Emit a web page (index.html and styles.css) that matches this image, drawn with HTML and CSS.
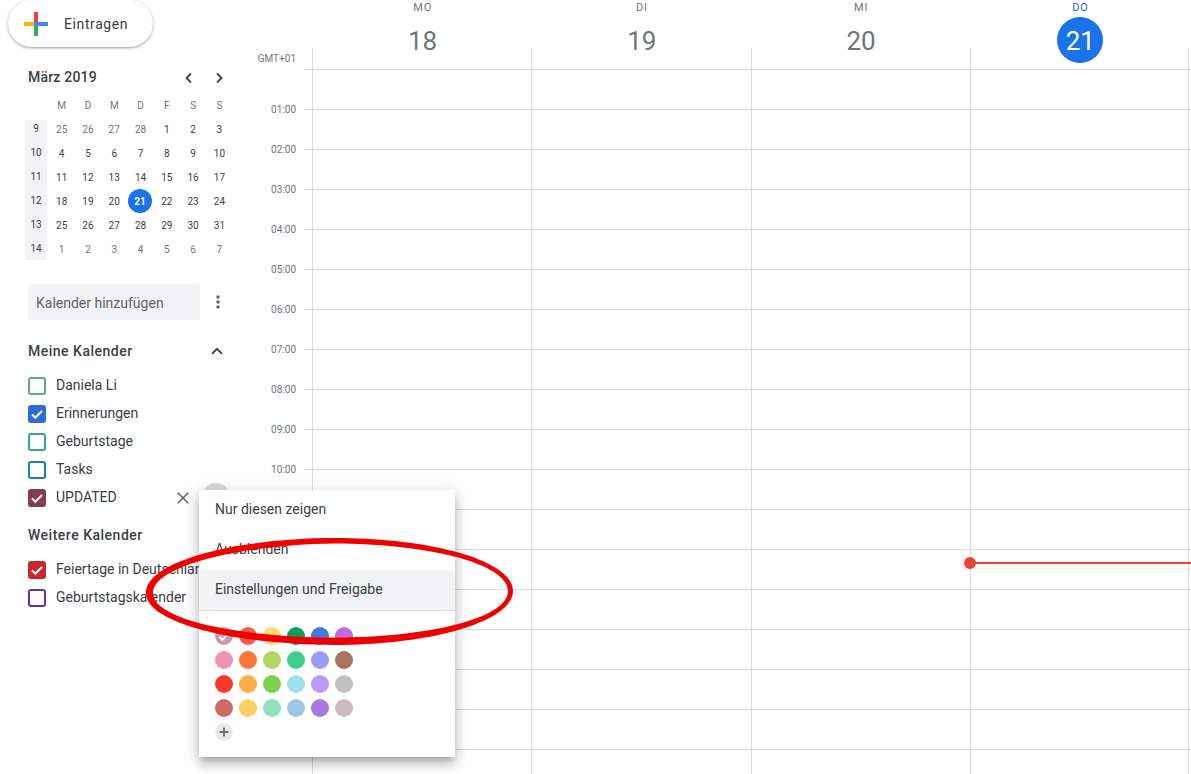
FILE: index.html
```html
<!DOCTYPE html>
<html lang="de">
<head>
  <meta charset="UTF-8" />
  <title>Kalender</title>
  <link rel="stylesheet" href="styles.css">
</head>
<body>
  <aside class="sidebar">
    <button class="create-btn">
      <svg class="create-plus" width="24" height="24" viewBox="0 0 24 24">
        <path fill="#fbbc05" d="M0 10h10v4H0z"/>
        <path fill="#34a853" d="M10 14h4v10h-4z"/>
        <path fill="#4285f4" d="M10 10h14v4H10z"/>
        <path fill="#ea4335" d="M10 0h4v10h-4z"/>
      </svg>
      <span>Eintragen</span>
    </button>

    <div class="mini-head">
      <span class="mini-title">März 2019</span>
      <div class="mini-nav">
        <svg width="12" height="12" viewBox="0 0 12 12"><path d="M8 1.500 3.500 6 8 10.500" fill="none" stroke="#3c4043" stroke-width="1.800"/></svg>
        <svg width="12" height="12" viewBox="0 0 12 12"><path d="M4 1.500 8.500 6 4 10.500" fill="none" stroke="#3c4043" stroke-width="1.800"/></svg>
      </div>
    </div>

    <div class="mini-cal">
      <div class="mini-weeks">
        <div>9</div><div>10</div><div>11</div><div>12</div><div>13</div><div>14</div>
      </div>
      <div class="mini-days">
        <span class="wd">M</span><span class="wd">D</span><span class="wd">M</span><span class="wd">D</span><span class="wd">F</span><span class="wd">S</span><span class="wd">S</span>
        <span class="off">25</span><span class="off">26</span><span class="off">27</span><span class="off">28</span><span>1</span><span>2</span><span>3</span>
        <span>4</span><span>5</span><span>6</span><span>7</span><span>8</span><span>9</span><span>10</span>
        <span>11</span><span>12</span><span>13</span><span>14</span><span>15</span><span>16</span><span>17</span>
        <span>18</span><span>19</span><span>20</span><span class="cur"><b>21</b></span><span>22</span><span>23</span><span>24</span>
        <span>25</span><span>26</span><span>27</span><span>28</span><span>29</span><span>30</span><span>31</span>
        <span class="off">1</span><span class="off">2</span><span class="off">3</span><span class="off">4</span><span class="off">5</span><span class="off">6</span><span class="off">7</span>
      </div>
    </div>

    <div class="add-row">
      <div class="add-input">Kalender hinzufügen</div>
      <svg width="4" height="14" viewBox="0 0 4 14" fill="#5f6368"><circle cx="2" cy="2" r="1.700"/><circle cx="2" cy="7" r="1.700"/><circle cx="2" cy="12" r="1.700"/></svg>
    </div>

    <div class="section-head my-head">
      <span>Meine Kalender</span>
      <svg width="12" height="8" viewBox="0 0 12 8"><path d="M1 6.800 6 1.800l5 5" fill="none" stroke="#3c4043" stroke-width="1.800"/></svg>
    </div>
    <ul class="cal-list">
      <li><i class="box teal"></i>Daniela Li</li>
      <li><i class="box blue checked"><svg viewBox="0 0 18 18"><path d="M4 9.500l3.300 3.300L14 6" /></svg></i>Erinnerungen</li>
      <li><i class="box green"></i>Geburtstage</li>
      <li><i class="box ocean"></i>Tasks</li>
      <li class="hovered">
        <i class="box wine checked"><svg viewBox="0 0 18 18"><path d="M4 9.500l3.300 3.300L14 6" /></svg></i>
        <span class="cal-name">UPDATED</span>
        <svg class="close-icon" width="12" height="12" viewBox="0 0 12 12"><path d="M.7.700l10.600 10.600M11.300.700.700 11.300" stroke="#5f6368" stroke-width="1.600"/></svg>
        <span class="more-dot"></span>
      </li>
    </ul>

    <div class="section-head other-head"><span>Weitere Kalender</span></div>
    <ul class="cal-list">
      <li><i class="box red checked"><svg viewBox="0 0 18 18"><path d="M4 9.500l3.300 3.300L14 6" /></svg></i>Feiertage in Deutschland</li>
      <li><i class="box violet"></i>Geburtstagskalender</li>
    </ul>
  </aside>

  <main class="main">
    <div class="day-head">
      <div class="day-col"><span class="day-name">MO</span><span class="day-num">18</span></div>
      <div class="day-col"><span class="day-name">DI</span><span class="day-num">19</span></div>
      <div class="day-col"><span class="day-name">MI</span><span class="day-num">20</span></div>
      <div class="day-col today"><span class="day-name">DO</span><span class="day-num">21</span></div>
    </div>
    <div class="grid-area">
      <div class="hours">
        <div class="tz">GMT+01</div>
        <div>01:00</div><div>02:00</div><div>03:00</div><div>04:00</div><div>05:00</div>
        <div>06:00</div><div>07:00</div><div>08:00</div><div>09:00</div><div>10:00</div>
      </div>
      <div class="timeline">
        <div class="day"></div>
        <div class="day"></div>
        <div class="day"></div>
        <div class="day last"><div class="now-line"></div></div>
      </div>
    </div>
  </main>

  <!-- calendar options menu -->
  <div class="menu">
    <div class="menu-item">Nur diesen zeigen</div>
    <div class="menu-item">Ausblenden</div>
    <div class="menu-item active">Einstellungen und Freigabe</div>
    <div class="swatches">
      <span class="dot picked" style="background:#c79ab0"><svg viewBox="0 0 18 18"><path d="M4 9.500l3.300 3.300L14 6" /></svg></span><span class="dot" style="background:#f6594b"></span><span class="dot" style="background:#fddc6f"></span><span class="dot" style="background:#109d58"></span><span class="dot" style="background:#4179e0"></span><span class="dot" style="background:#c26ae0"></span>
      <span class="dot" style="background:#f091b5"></span><span class="dot" style="background:#ff7537"></span><span class="dot" style="background:#b0d962"></span><span class="dot" style="background:#3ecf8e"></span><span class="dot" style="background:#9a9cff"></span><span class="dot" style="background:#ac725e"></span>
      <span class="dot" style="background:#fa3a28"></span><span class="dot" style="background:#ffad46"></span><span class="dot" style="background:#7bd148"></span><span class="dot" style="background:#9fe1e7"></span><span class="dot" style="background:#b99aff"></span><span class="dot" style="background:#c2c2c2"></span>
      <span class="dot" style="background:#cf6a62"></span><span class="dot" style="background:#fad165"></span><span class="dot" style="background:#92e1c0"></span><span class="dot" style="background:#9fc6e7"></span><span class="dot" style="background:#a47ae2"></span><span class="dot" style="background:#cabdbf"></span>
      <span class="dot add"><svg viewBox="0 0 18 18"><path d="M9 4.500v9M4.500 9h9" /></svg></span>
    </div>
  </div>

  <!-- red marker ring around the settings entry -->
  <svg class="marker" width="1191" height="774" viewBox="0 0 1191 774">
    <path fill="#f00000" fill-rule="evenodd" d="M146 593C146 560 240 538 335 538C430 538 513 560 513 591C513 622 430 645 335 645C240 645 146 624 146 593ZM153 593C153 621 245 637.500 335 637.500C425 637.500 508 619 508 591C508 563 425 543.500 335 543.500C245 544.500 153 565 153 593Z"/>
  </svg>
</body>
</html>
```

FILE: styles.css
```css
* {
  box-sizing: border-box;
}
body {
  margin: 0;
  height: 100vh;
  overflow: hidden;
  display: flex;
  background: #fff;
  color: #3c4043;
  font-family: Roboto, "Liberation Sans", sans-serif;
}

/* Sidebar */
.sidebar {
  flex: 0 0 256px;
  padding-left: 28px;
}
.create-btn {
  display: flex;
  align-items: center;
  gap: 16px;
  width: 145px;
  height: 47px;
  margin-left: -20px;
  padding: 0 0 0 16px;
  border: none;
  border-radius: 24px;
  background: #fff;
  box-shadow: 0 1px 2px rgba(60,64,67,0.3), 0 1px 3px 1px rgba(60,64,67,0.15);
  color: #3c4043;
  font: 400 14px Roboto, sans-serif;
  letter-spacing: 0.6px;
}

.mini-head {
  display: flex;
  justify-content: space-between;
  align-items: center;
  width: 197px;
  height: 28px;
  margin-top: 16px;
}
.mini-title {
  font-size: 14px;
  font-weight: 500;
  letter-spacing: 0.2px;
}
.mini-nav {
  display: flex;
  gap: 18px;
  margin-top: 1px;
}

.mini-cal {
  display: flex;
  height: 168px;
  margin: 2px 0 0 -3px;
}
.mini-weeks {
  width: 22px;
  height: 140px;
  margin-top: 27px;
  overflow: hidden;
  background: #f1f3f4;
  font-size: 10px;
  text-align: center;
}
.mini-weeks div {
  height: 24px;
  line-height: 18px;
}
.mini-days {
  display: grid;
  grid-template-columns: repeat(7, 26.3px);
  grid-auto-rows: 24px;
  margin-left: 1.5px;
  font-size: 10px;
}
.mini-days span {
  display: flex;
  justify-content: center;
  align-items: center;
}
.mini-days .wd,
.mini-days .off {
  color: #70757a;
}
.mini-days .cur b {
  display: flex;
  justify-content: center;
  align-items: center;
  flex: none;
  width: 24px;
  height: 24px;
  margin-left: -1px;
  border-radius: 50%;
  background: #1a73e8;
  color: #fff;
}

.add-row {
  display: flex;
  align-items: center;
  gap: 16px;
  margin-top: 23px;
}
.add-input {
  width: 172px;
  height: 36px;
  padding-left: 8px;
  border-radius: 4px 4px 0 0;
  background: #f1f3f4;
  color: #5f6368;
  font-size: 14px;
  line-height: 38px;
}

.section-head {
  display: flex;
  justify-content: space-between;
  align-items: center;
  width: 195px;
  height: 28px;
  font-size: 14px;
  font-weight: 500;
  letter-spacing: 0.5px;
}
.my-head {
  margin-top: 17px;
}
.other-head {
  margin-top: 10px;
}

.cal-list {
  list-style: none;
  margin: 6px 0 0;
  padding: 0;
}
.cal-list li {
  display: flex;
  align-items: center;
  height: 28px;
  font-size: 14px;
  white-space: nowrap;
}
.box {
  flex: none;
  width: 18px;
  height: 18px;
  margin: 2px 10px 0 0;
  border: 2px solid;
  border-radius: 3px;
}
.box svg {
  display: block;
  width: 18px;
  height: 18px;
  margin: -2px;
}
.box path,
.dot.picked path {
  fill: none;
  stroke: #fff;
  stroke-width: 2;
}
.box.teal { color: #5ba88f; }
.box.green { color: #33a88c; }
.box.ocean { color: #1a7fae; }
.box.violet { color: #5e35b1; }
.box.blue { color: #2c6ad4; background: #2c6ad4; }
.box.wine { color: #8a3a4e; background: #8a3a4e; }
.box.red { color: #c9292c; background: #c9292c; }

.cal-name {
  flex: 0 0 121px;
}
.close-icon {
  flex: none;
  margin-top: 2px;
}
.more-dot {
  flex: none;
  width: 28px;
  height: 28px;
  margin-left: 13px;
  border-radius: 50%;
  background: #d9d9d9;
}

/* Week view */
.main {
  flex: 1;
  min-width: 0;
  display: flex;
  flex-direction: column;
}
.day-head {
  position: relative;
  z-index: 1;
  display: flex;
  height: 48px;
  margin-left: 57px;
}
.day-col {
  flex: 0 0 219.25px;
  display: flex;
  flex-direction: column;
  align-items: center;
}
.day-name {
  height: 14px;
  color: #70757a;
  font-size: 11px;
  line-height: 16px;
  letter-spacing: 0.8px;
}
.day-num {
  display: flex;
  justify-content: center;
  align-items: center;
  flex: none;
  width: 46px;
  height: 46px;
  margin-top: 3px;
  padding-top: 1px;
  border-radius: 50%;
  color: #70757a;
  font-size: 26px;
}
.today .day-name {
  color: #1a67d2;
}
.today .day-num {
  background: #1a73e8;
  color: #fff;
}

.grid-area {
  flex: 1;
  display: flex;
}
.hours {
  flex: 0 0 48px;
  padding: 1px 8px 0 0;
  color: #70757a;
  font-size: 10px;
  text-align: right;
}
.hours div {
  height: 40px;
  line-height: 40px;
}
.hours .tz {
  height: 20px;
  margin-bottom: 21px;
  line-height: 20px;
}
.timeline {
  flex: 1;
  display: flex;
  padding-left: 8px;
  background: repeating-linear-gradient(to bottom, transparent 0 39px, #dadce0 39px 40px) 0 -18px;
}
.day {
  position: relative;
  flex: 0 0 219.25px;
  border-left: 1px solid #dadce0;
}
.day.last {
  border-right: 1px solid #dadce0;
}
.now-line {
  position: absolute;
  top: 514px;
  left: -1px;
  right: -4px;
  height: 2px;
  background: #ea4335;
}
.now-line::before {
  content: "";
  position: absolute;
  top: -5px;
  left: -6px;
  width: 12px;
  height: 12px;
  border-radius: 50%;
  background: #ea4335;
}

/* Options menu */
.menu {
  position: absolute;
  top: 490px;
  left: 199px;
  z-index: 2;
  width: 256px;
  background: #fff;
  box-shadow: 0 8px 10px 1px rgba(0,0,0,0.14), 0 3px 14px 2px rgba(0,0,0,0.12), 0 5px 5px -3px rgba(0,0,0,0.2);
}
.menu-item {
  height: 40px;
  padding-left: 16px;
  font-size: 14px;
  line-height: 39px;
}
.menu-item.active {
  background: #f1f3f4;
}
.swatches {
  display: grid;
  grid-template-columns: repeat(6, 18px);
  gap: 6px;
  padding: 16px;
  border-top: 1px solid #dadce0;
}
.dot {
  width: 18px;
  height: 18px;
  border-radius: 50%;
}
.dot svg {
  display: block;
}
.dot.add {
  background: #e8eaed;
}
.dot.add path {
  fill: none;
  stroke: #70757a;
  stroke-width: 2;
}

.marker {
  position: absolute;
  top: 0;
  left: 0;
  z-index: 3;
  pointer-events: none;
}
```
